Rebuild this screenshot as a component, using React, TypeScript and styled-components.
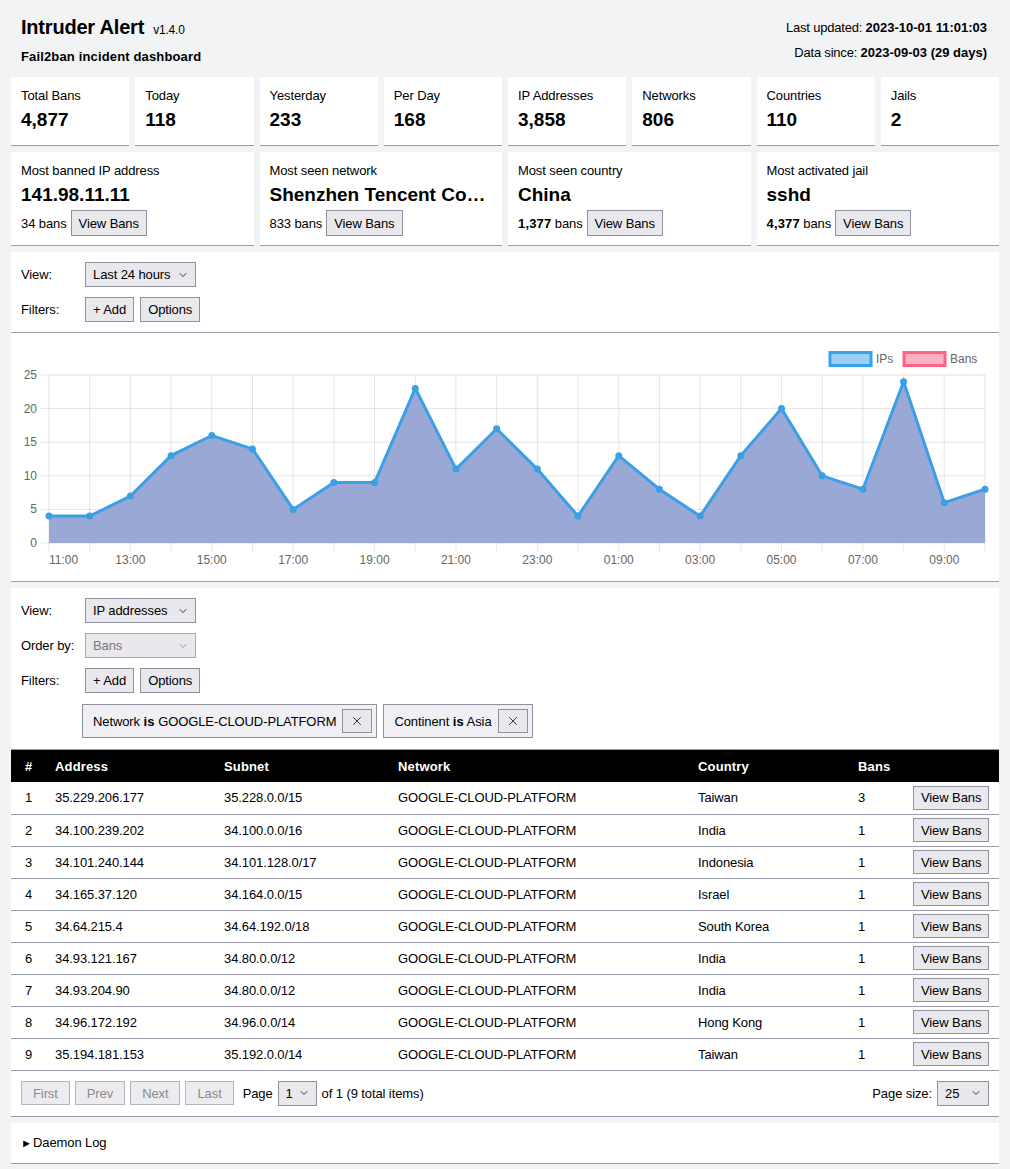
import React from "react";
import styled, { createGlobalStyle } from "styled-components";
import { ChevronDown, X as XIcon } from "lucide-react";

const GlobalStyle = createGlobalStyle`
  html, body { margin: 0; padding: 0; }
  body {
    background: #f2f3f5;
    font-family: "Liberation Sans", Arial, sans-serif;
    font-size: 13px;
    letter-spacing: -0.1px;
    color: #000;
  }
  b, th { letter-spacing: 0.15px; }
  * { box-sizing: border-box; }
`;

const BORDER = "#9b9bab";

const Page = styled.div`
  padding: 0 11px 6px;
  display: flex;
  flex-direction: column;
  gap: 6px;
`;

const Header = styled.header`
  display: flex;
  justify-content: space-between;
  align-items: flex-start;
  padding: 15px 12px 4px 10px;
`;

const TitleBlock = styled.div`
  display: flex;
  flex-direction: column;
`;

const TitleRow = styled.div`
  display: flex;
  align-items: baseline;
  gap: 9px;
  height: 24px;
  line-height: 24px;
`;

const Title = styled.h1`
  margin: 0;
  font-size: 20px;
  line-height: 24px;
  font-weight: bold;
  letter-spacing: -0.2px;
`;

const Version = styled.span`
  font-size: 12px;
  letter-spacing: -0.2px;
`;

const Subtitle = styled.div`
  margin-top: 8px;
  line-height: 20px;
  font-weight: bold;
  letter-spacing: 0.15px;
`;

const MetaBlock = styled.div`
  padding-top: 3px;
  display: flex;
  flex-direction: column;
  gap: 5px;
  text-align: right;
  letter-spacing: -0.2px;
  b { letter-spacing: 0; }
`;

const MetaLine = styled.div`
  line-height: 20px;
`;

const Grid = styled.div<{ $cols: number }>`
  display: grid;
  grid-template-columns: repeat(${(p) => p.$cols}, 1fr);
  gap: 6px;
`;

const Card = styled.div`
  background: #fff;
  border-bottom: 1px solid ${BORDER};
  padding: 10px 10px 13px;
  min-width: 0;
`;

const WideCard = styled(Card)`
  padding-bottom: 9px;
`;

const CardLabel = styled.div`
  line-height: 18px;
  white-space: nowrap;
`;

const CardValue = styled.div`
  margin-top: 3px;
  font-size: 19px;
  font-weight: bold;
  letter-spacing: 0;
  line-height: 24px;
  white-space: nowrap;
  overflow: hidden;
  text-overflow: ellipsis;
`;

const BansRow = styled.div`
  margin-top: 3px;
  display: flex;
  align-items: center;
  gap: 4px;
  height: 26px;
`;

const Count = styled.span<{ $bold?: boolean }>`
  font-weight: ${(p) => (p.$bold ? "bold" : "normal")};
  letter-spacing: ${(p) => (p.$bold ? "0.15px" : "-0.1px")};
`;

const Button = styled.button<{ $h?: number }>`
  font-family: inherit;
  font-size: 13px;
  letter-spacing: -0.1px;
  color: #000;
  background: #e9e9ed;
  border: 1px solid #8f8f9d;
  border-radius: 0;
  padding: 0 7px;
  height: ${(p) => p.$h ?? 25}px;
  display: inline-flex;
  align-items: center;
  justify-content: center;
  white-space: nowrap;
  cursor: pointer;
`;

const PagerButton = styled(Button)`
  padding: 0 11px;
  height: 24px;
  color: #8a8a8e;
  background: #ececf0;
  border-color: #b4b4bf;
  cursor: default;
`;

const Group = styled.div`
  display: flex;
  flex-direction: column;
`;

const Section = styled.div`
  background: #fff;
  border-bottom: 1px solid ${BORDER};
`;

const Controls = styled(Section)<{ $pb?: number }>`
  padding: 10px 10px ${(p) => p.$pb ?? 10}px;
  display: flex;
  flex-direction: column;
  gap: 10px;
`;

const ControlRow = styled.div`
  display: flex;
  align-items: center;
  gap: 6px;
`;

const ControlLabel = styled.div`
  width: 58px;
  white-space: nowrap;
`;

const SelectBox = styled.div<{ $w: number; $disabled?: boolean }>`
  display: inline-flex;
  align-items: center;
  justify-content: space-between;
  width: ${(p) => p.$w}px;
  height: 25px;
  padding: 0 6px 0 7px;
  white-space: nowrap;
  background: #e9e9ed;
  border: 1px solid ${(p) => (p.$disabled ? "#a8a8b4" : "#8f8f9d")};
  color: ${(p) => (p.$disabled ? "#77777c" : "#000")};
  svg { color: ${(p) => (p.$disabled ? "#8a8a8e" : "#222")}; flex: none; }
`;

const ChipRow = styled.div`
  display: flex;
  gap: 6px;
  margin-top: 1px;
  padding-left: 61px;
`;

const Chip = styled.div`
  display: inline-flex;
  align-items: center;
  gap: 6px;
  height: 34px;
  padding: 0 4px 0 10px;
  background: #f0f0f4;
  border: 1px solid #8f8f9d;
  white-space: nowrap;
`;

const ChipClose = styled(Button)`
  width: 30px;
  height: 24px;
  padding: 0;
`;

const ChartBox = styled(Section)`
  svg { display: block; }
`;

const Table = styled.table`
  width: 100%;
  border-collapse: collapse;
  background: #fff;
  table-layout: fixed;
`;

const Th = styled.th<{ $first?: boolean }>`
  background: #000;
  color: #fff;
  font-weight: bold;
  text-align: left;
  height: 32px;
  padding: 0 ${(p) => (p.$first ? "0 0 14px" : "10px")};
`;

const Td = styled.td<{ $first?: boolean }>`
  height: 32px;
  border-bottom: 1px solid ${BORDER};
  padding: 0 ${(p) => (p.$first ? "0 0 14px" : "10px")};
  white-space: nowrap;
`;

const Pager = styled(Section)`
  padding: 10px;
  display: flex;
  justify-content: space-between;
  align-items: center;
`;

const PagerGroup = styled.div`
  display: flex;
  align-items: center;
  gap: 5px;
`;

const PageText = styled.span<{ $ml?: number }>`
  margin-left: ${(p) => p.$ml ?? 0}px;
  white-space: nowrap;
`;

const LogSection = styled(Section)`
  padding: 10px;
`;

const Summary = styled.summary`
  line-height: 20px;
  cursor: pointer;
  list-style: none;
  &::-webkit-details-marker { display: none; }
  &::before {
    content: "►";
    font-size: 11px;
    display: inline-block;
    width: 12px;
  }
`;

const Select = ({ value, w, disabled }: { value: string; w: number; disabled?: boolean }) => (
  <SelectBox $w={w} $disabled={disabled}>
    <span>{value}</span>
    <ChevronDown size={12} strokeWidth={1.8} />
  </SelectBox>
);

const stats = [
  ["Total Bans", "4,877"],
  ["Today", "118"],
  ["Yesterday", "233"],
  ["Per Day", "168"],
  ["IP Addresses", "3,858"],
  ["Networks", "806"],
  ["Countries", "110"],
  ["Jails", "2"],
];

const highlights = [
  { label: "Most banned IP address", value: "141.98.11.11", count: "34", bold: false },
  { label: "Most seen network", value: "Shenzhen Tencent Computer Systems Company Limited", count: "833", bold: false },
  { label: "Most seen country", value: "China", count: "1,377", bold: true },
  { label: "Most activated jail", value: "sshd", count: "4,377", bold: true },
];

const rows = [
  ["35.229.206.177", "35.228.0.0/15", "Taiwan", "3"],
  ["34.100.239.202", "34.100.0.0/16", "India", "1"],
  ["34.101.240.144", "34.101.128.0/17", "Indonesia", "1"],
  ["34.165.37.120", "34.164.0.0/15", "Israel", "1"],
  ["34.64.215.4", "34.64.192.0/18", "South Korea", "1"],
  ["34.93.121.167", "34.80.0.0/12", "India", "1"],
  ["34.93.204.90", "34.80.0.0/12", "India", "1"],
  ["34.96.172.192", "34.96.0.0/14", "Hong Kong", "1"],
  ["35.194.181.153", "35.192.0.0/14", "Taiwan", "1"],
];

const vals = [4, 4, 7, 13, 16, 14, 5, 9, 9, 23, 11, 17, 11, 4, 13, 8, 4, 13, 20, 10, 8, 24, 6, 8];
const px = (i: number) => 38 + (i * 936) / 23;
const py = (v: number) => 210 - v * 6.72;

const Chart = () => {
  const pts = vals.map((v, i) => `${px(i).toFixed(1)},${py(v).toFixed(1)}`);
  const line = "M" + pts.join(" L");
  const area = `M${px(0)},210 L${pts.join(" L")} L${px(23)},210 Z`;
  const grid = "rgba(0,0,0,0.1)";
  return (
    <svg width={988} height={248} viewBox="0 0 988 248" fontFamily="Liberation Sans, Arial, sans-serif" fontSize={12} letterSpacing={0}>
      {vals.map((_, i) => (
        <line key={"v" + i} x1={px(i)} x2={px(i)} y1={42} y2={218} stroke={grid} strokeWidth={1} />
      ))}
      {[0, 5, 10, 15, 20, 25].map((v) => (
        <g key={"h" + v}>
          <line x1={30} x2={974} y1={py(v)} y2={py(v)} stroke={grid} strokeWidth={1} />
          <text x={26} y={py(v) + 4} textAnchor="end" fill="#666">{v}</text>
        </g>
      ))}
      {vals.map((_, i) =>
        i % 2 === 0 ? (
          <text key={"x" + i} x={i === 0 ? 38 : px(i)} y={231} textAnchor={i === 0 ? "start" : "middle"} fill="#666">
            {String((11 + i) % 24).padStart(2, "0")}:00
          </text>
        ) : null
      )}
      <path d={area} fill="rgb(153,168,212)" />
      <path d={line} fill="none" stroke="#3b9fe6" strokeWidth={3} strokeLinejoin="miter" />
      {vals.map((v, i) => (
        <circle key={"p" + i} cx={px(i)} cy={py(v)} r={3.5} fill="#3b9fe6" />
      ))}
      <rect x={819} y={19.5} width={41} height={13} fill="#9ad0f5" stroke="#36a2eb" strokeWidth={3} />
      <text x={865} y={30} fill="#666">IPs</text>
      <rect x={893} y={19.5} width={41} height={13} fill="#ffb1c1" stroke="#ff6384" strokeWidth={3} />
      <text x={939} y={30} fill="#666">Bans</text>
    </svg>
  );
};

export default function App() {
  return (
    <>
      <GlobalStyle />
      <Page>
        <Header>
          <TitleBlock>
            <TitleRow>
              <Title>Intruder Alert</Title>
              <Version>v1.4.0</Version>
            </TitleRow>
            <Subtitle>Fail2ban incident dashboard</Subtitle>
          </TitleBlock>
          <MetaBlock>
            <MetaLine>
              Last updated: <b>2023-10-01 11:01:03</b>
            </MetaLine>
            <MetaLine>
              Data since: <b>2023-09-03 (29 days)</b>
            </MetaLine>
          </MetaBlock>
        </Header>

        <Grid $cols={8}>
          {stats.map(([l, v]) => (
            <Card key={l}>
              <CardLabel>{l}</CardLabel>
              <CardValue>{v}</CardValue>
            </Card>
          ))}
        </Grid>

        <Grid $cols={4}>
          {highlights.map((h) => (
            <WideCard key={h.label}>
              <CardLabel>{h.label}</CardLabel>
              <CardValue>{h.value}</CardValue>
              <BansRow>
                <span>
                  <Count $bold={h.bold}>{h.count}</Count> bans
                </span>
                <Button $h={26}>View Bans</Button>
              </BansRow>
            </WideCard>
          ))}
        </Grid>

        <Group>
          <Controls>
            <ControlRow>
              <ControlLabel>View:</ControlLabel>
              <Select value="Last 24 hours" w={111} />
            </ControlRow>
            <ControlRow>
              <ControlLabel>Filters:</ControlLabel>
              <Button>+ Add</Button>
              <Button>Options</Button>
            </ControlRow>
          </Controls>
          <ChartBox>
            <Chart />
          </ChartBox>
        </Group>

        <Group>
          <Controls $pb={11}>
            <ControlRow>
              <ControlLabel>View:</ControlLabel>
              <Select value="IP addresses" w={111} />
            </ControlRow>
            <ControlRow>
              <ControlLabel>Order by:</ControlLabel>
              <Select value="Bans" w={111} disabled />
            </ControlRow>
            <ControlRow>
              <ControlLabel>Filters:</ControlLabel>
              <Button>+ Add</Button>
              <Button>Options</Button>
            </ControlRow>
            <ChipRow>
              <Chip>
                <span>
                  Network <b>is</b> GOOGLE-CLOUD-PLATFORM
                </span>
                <ChipClose aria-label="Remove">
                  <XIcon size={14} strokeWidth={1.3} />
                </ChipClose>
              </Chip>
              <Chip>
                <span>
                  Continent <b>is</b> Asia
                </span>
                <ChipClose aria-label="Remove">
                  <XIcon size={14} strokeWidth={1.3} />
                </ChipClose>
              </Chip>
            </ChipRow>
          </Controls>
          <Table>
            <colgroup>
              <col style={{ width: 34 }} />
              <col style={{ width: 169 }} />
              <col style={{ width: 174 }} />
              <col style={{ width: 300 }} />
              <col style={{ width: 160 }} />
              <col style={{ width: 55 }} />
              <col style={{ width: 96 }} />
            </colgroup>
            <thead>
              <tr>
                <Th $first>#</Th>
                <Th>Address</Th>
                <Th>Subnet</Th>
                <Th>Network</Th>
                <Th>Country</Th>
                <Th>Bans</Th>
                <Th />
              </tr>
            </thead>
            <tbody>
              {rows.map((r, i) => (
                <tr key={r[0]}>
                  <Td $first>{i + 1}</Td>
                  <Td>{r[0]}</Td>
                  <Td>{r[1]}</Td>
                  <Td>GOOGLE-CLOUD-PLATFORM</Td>
                  <Td>{r[2]}</Td>
                  <Td>{r[3]}</Td>
                  <Td>
                    <Button $h={24}>View Bans</Button>
                  </Td>
                </tr>
              ))}
            </tbody>
          </Table>
          <Pager>
            <PagerGroup>
              <PagerButton disabled>First</PagerButton>
              <PagerButton disabled>Prev</PagerButton>
              <PagerButton disabled>Next</PagerButton>
              <PagerButton disabled>Last</PagerButton>
              <PageText $ml={4}>Page</PageText>
              <Select value="1" w={39} />
              <PageText>of 1 (9 total items)</PageText>
            </PagerGroup>
            <PagerGroup>
              <PageText>Page size:</PageText>
              <Select value="25" w={52} />
            </PagerGroup>
          </Pager>
        </Group>

        <LogSection>
          <details>
            <Summary>Daemon Log</Summary>
          </details>
        </LogSection>
      </Page>
    </>
  );
}
